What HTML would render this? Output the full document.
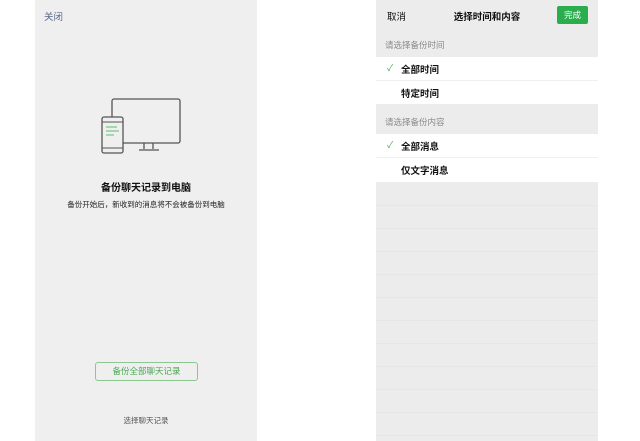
<!DOCTYPE html>
<html><head><meta charset="utf-8"><style>
*{margin:0;padding:0;box-sizing:border-box}
body{width:640px;height:441px;background:#fff;position:relative;overflow:hidden;font-family:"Liberation Sans","Noto Sans CJK SC",sans-serif;}
.a{position:absolute;white-space:nowrap}
#L{position:absolute;left:35px;top:0;width:222px;height:441px;background:#efefef}
#R{position:absolute;left:376px;top:0;width:222px;height:441px;background:#ececec}
.row{position:absolute;left:0;width:222px;background:#fff;font-size:9.5px;color:#111;font-weight:bold}
.row span{position:absolute;left:25px;top:50%;transform:translateY(-50%)}
.sh{position:absolute;left:9px;font-size:8.5px;color:#8a8a8a}
.ln{position:absolute;left:0;width:222px;height:1px;background:#e6e6e6}
</style></head><body>
<div id="L">
 <div class="a" style="left:9px;top:9px;font-size:9.5px;color:#5a6a8a">关闭</div>
 <svg class="a" style="left:64px;top:96px" width="90" height="62" viewBox="0 0 90 62">
  <rect x="13" y="3" width="68" height="44" rx="2" fill="none" stroke="#555" stroke-width="1.3"/>
  <path d="M45 47v6M54 47v6M40 54h20" stroke="#555" stroke-width="1.3" fill="none"/>
  <rect x="3" y="21" width="21" height="36" rx="2" fill="#efefef" stroke="#555" stroke-width="1.3"/>
  <path d="M3 26h21M3 52h21" stroke="#555" stroke-width="1"/>
  <path d="M7 31h11M7 35h13M7 39h8" stroke="#5bbf6a" stroke-width="1"/>
 </svg>
 <div class="a" style="left:0;width:222px;text-align:center;top:179px;font-size:10px;color:#111;font-weight:bold">备份聊天记录到电脑</div>
 <div class="a" style="left:0;width:222px;text-align:center;top:199px;font-size:7.5px;color:#222">备份开始后，新收到的消息将不会被备份到电脑</div>
 <div class="a" style="left:60px;top:362px;width:103px;height:19px;border:1px solid #8bc88f;border-radius:3px;text-align:center;line-height:17px;font-size:8.5px;color:#4aa853">备份全部聊天记录</div>
 <div class="a" style="left:0;width:222px;text-align:center;top:415px;font-size:7.5px;color:#555">选择聊天记录</div>
</div>
<div id="R">
 <div class="a" style="left:11px;top:9px;font-size:9.5px;color:#111">取消</div>
 <div class="a" style="left:0;width:222px;text-align:center;top:9px;font-size:9.5px;color:#111;font-weight:bold">选择时间和内容</div>
 <div class="a" style="left:181px;top:6px;width:31px;height:18px;background:#2aae4d;border-radius:2px;color:#fff;font-size:8.5px;text-align:center;line-height:18px">完成</div>
 <div class="sh" style="top:39px">请选择备份时间</div>
 <div class="row" style="top:57px;height:23px"><span>全部时间</span></div>
 <div class="a" style="left:11px;top:61px;font-size:9px;color:#4aa853">✓</div>
 <div class="ln" style="top:80px;background:#f0f0f0"></div>
 <div class="row" style="top:81px;height:23px"><span>特定时间</span></div>
 <div class="sh" style="top:116px">请选择备份内容</div>
 <div class="row" style="top:134px;height:23px"><span>全部消息</span></div>
 <div class="a" style="left:11px;top:138px;font-size:9px;color:#4aa853">✓</div>
 <div class="ln" style="top:157px;background:#f0f0f0"></div>
 <div class="row" style="top:158px;height:24px"><span>仅文字消息</span></div>
 <div class="ln" style="top:205px"></div><div class="ln" style="top:228px"></div><div class="ln" style="top:251px"></div>
 <div class="ln" style="top:274px"></div><div class="ln" style="top:297px"></div><div class="ln" style="top:320px"></div>
 <div class="ln" style="top:343px"></div><div class="ln" style="top:366px"></div><div class="ln" style="top:389px"></div>
 <div class="ln" style="top:412px"></div><div class="ln" style="top:435px"></div>
</div>
</body></html>
